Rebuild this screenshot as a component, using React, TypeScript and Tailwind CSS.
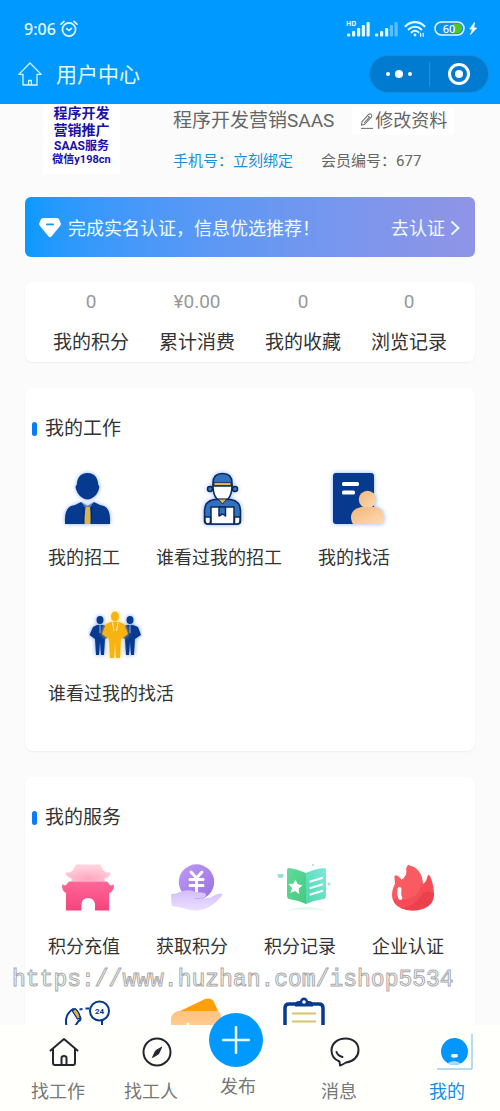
import React from "react";

type Item = { label: string; icon: React.ReactNode; hideLabel?: boolean };

const NAVY = "#063a8f";

/* ---------- status bar icons ---------- */

const AlarmIcon = () => (
  <svg width="18" height="18" viewBox="0 0 18 18" fill="none" stroke="#e4f9ff" strokeLinecap="round">
    <circle cx="9" cy="9.5" r="6.6" strokeWidth="1.7" />
    <path d="M6.6 8.6 9 10.6l2.6-2.2" strokeWidth="1.5" />
    <path d="M1 4.2 4 1.4M17 4.2l-3-2.8" strokeWidth="1.6" />
  </svg>
);

const SignalIcon = ({ hd }: { hd?: boolean }) => (
  <svg width="24" height="18" viewBox="0 0 24 18" fill="#e4f9ff">
    {hd && (
      <text x="0" y="6" fontSize="7" fontWeight="700">
        HD
      </text>
    )}
    <rect x="1" y="13.500" width="3.200" height="3" rx="1" />
    <rect x="6" y="11" width="3.200" height="5.500" rx="1" />
    <rect x="11" y="8" width="3.200" height="8.500" rx="1" />
    <rect x="15.800" y="5" width="3.200" height="11.500" rx="1" opacity={hd ? 1 : 0.4} />
    <rect x="20.500" y="2" width="3.200" height="14.500" rx="1" opacity={hd ? 1 : 0.4} />
  </svg>
);

const WifiIcon = () => (
  <svg width="22" height="18" viewBox="0 0 22 18" fill="none" stroke="#e4f9ff" strokeWidth="2.1" strokeLinecap="round">
    <path d="M1.500 6.200C7 .8 15 .8 20.500 6.200" />
    <path d="M4.600 9.400c3.800-3.500 9-3.500 12.800 0" />
    <path d="M7.600 12.300c2-1.800 4.800-1.800 6.800 0" />
    <circle cx="11" cy="15" r="1.400" fill="#e4f9ff" stroke="none" />
    <path d="M16.600 13.300v3M19.200 13.300v3" strokeWidth="1.300" />
  </svg>
);

const BatteryIcon = () => (
  <svg width="44" height="16" viewBox="0 0 44 16">
    <rect x="1" y="1" width="29" height="13" rx="6.5" fill="#0a92ec" stroke="#e4f9ff" strokeWidth="1.5" />
    <path d="M19 2.800h4.500a4.700 4.700 0 0 1 0 9.400H19z" fill="#4fc42c" />
    <text x="15" y="11.5" fontSize="11" fontWeight="500" textAnchor="middle" fill="#fff">
      60
    </text>
    <path d="M40.500 1.500 35.800 8h2.700l-2 5.500L42.600 7h-3z" fill="#fff" stroke="#fff" strokeWidth=".8" />
  </svg>
);

/* ---------- header icons ---------- */

const HomeOutline = () => (
  <svg width="24" height="24" viewBox="0 0 24 24" fill="none" stroke="#d9f6ff" strokeWidth="1.3" strokeLinejoin="round">
    <path d="M12 1 .8 12.4H5V23h14V12.4h4.200z" />
    <path d="M10.600 23v-4.500h2.800V23" />
  </svg>
);

const EditIcon = () => (
  <svg width="16" height="18" viewBox="0 0 16 18" fill="none" stroke="#777" strokeWidth="1.1" strokeLinejoin="round">
    <path d="M2.500 13.200 3 9.600 9.800 2.200a2 2 0 0 1 2.800 2.600L5.800 12.200zM8.600 3.600l2.800 2.600M5 11l5-5.400" />
    <path d="M2 16.400h12" />
  </svg>
);

const DiamondIcon = () => (
  <svg width="22" height="20" viewBox="0 0 22 20">
    <path d="M4 0h14l2 1 2 5-1 2-8.600 10.600q-1.400 1.200-2.800 0L1 8 0 6l2-5z" fill="#fff" />
    <rect x="7" y="5.500" width="8" height="1.800" rx=".9" fill="#1195fb" />
  </svg>
);

const ArrowIcon = () => (
  <svg width="10" height="16" viewBox="0 0 10 16" fill="none" stroke="#eefcff" strokeWidth="1.800">
    <path d="M1.500 1.500 8.500 8l-7 6.500" />
  </svg>
);

/* ---------- job icons ---------- */

const BossIcon = () => (
  <svg className="size-[54px] drop-shadow-[0_0_2px_#8fb0ff]" viewBox="0 0 54 54" fill={NAVY}>
    <path d="M26.500 1c7.500 0 10.500 5 10.700 12 1.500.3 1.500 3 0 6C36 23 31 27.500 26.500 27.500S17 23 15.800 19c-1.500-3-1.500-5.700 0-6C16 6 19 1 26.500 1z" />
    <path d="M20 30q-5 3-10 4Q3 37 4 52h45q1-15-6-18-5-1-10-4l-6.500 4z" />
    <path d="M20 29.500l6.500 4 6.500-4-3.500 5.500h-6z" fill="#cfe0ff" opacity=".4" />
    <path d="M24.500 35h4.500l1 17h-7z" fill="#ddb44c" />
    <path d="M22 35 23 52M31 35l-1 17" stroke="#052763" />
  </svg>
);

const CourierIcon = () => (
  <svg
    className="size-[54px] drop-shadow-[0_0_2px_#8fb0ff]"
    viewBox="0 0 54 54"
    fill="none"
    stroke="#0a2a5c"
    strokeWidth="1.500"
    strokeLinejoin="round"
  >
    <circle cx="14" cy="17" r="2.500" fill="#3a78c4" />
    <circle cx="39" cy="17" r="2.500" fill="#3a78c4" />
    <path d="M17 13q0 15 9.500 17Q36 28 36 13z" fill="#fff" />
    <path d="M17 11q0-9.500 9.500-9.500T36 11v3H17z" fill="#3271bd" />
    <path d="M18 10.500h17v3H18z" fill="#eab544" strokeWidth=".8" />
    <path d="M8.500 39q0-10 10-11.500h16q10 1.500 10 11.500v10q0 3-3 3H12q-3.500 0-3.500-3z" fill="#3271bd" />
    <path d="M22 27h9l-4.500 5z" fill="#eab544" strokeWidth="1" />
    <path d="M15 35h23v17H15z" fill="#fff" />
    <path d="M23 35v9l3.500-2 3 2v-9z" fill="#3271bd" />
    <path d="M9 45h5.500v4.500q0 2.500-2.500 2.500-3 0-3-3zM38.500 45H44v4q0 3-3 3h-2.500z" fill="#fff" />
  </svg>
);

const ResumeIcon = () => (
  <svg className="size-[54px] drop-shadow-[0_0_2px_#8fb0ff]" viewBox="0 0 54 54">
    <defs>
      <linearGradient id="peach" x1="0" y1="0" x2="1" y2="1">
        <stop offset="0" stopColor="#f0b67c" />
        <stop offset="1" stopColor="#ffdbb2" />
      </linearGradient>
    </defs>
    <rect x="2" y="1" width="41" height="51" rx="3" fill={NAVY} />
    <rect x="11" y="10" width="17" height="4" rx="1.500" fill="#fff" />
    <rect x="11" y="18.500" width="13" height="4" rx="1.500" fill="#fff" />
    <circle cx="36.500" cy="27.500" r="8.700" fill="url(#peach)" />
    <path d="M22 52q-3-5-1.500-10Q22 37 30 35h14q9 1 9 12 0 4-2 5z" fill="url(#peach)" />
  </svg>
);

const TeamIcon = () => (
  <svg className="size-[54px]" viewBox="0 0 54 54">
    <g fill={NAVY} className="drop-shadow-[0_0_2px_#6f9cff]">
      <ellipse cx="12" cy="12" rx="3.500" ry="4" />
      <path d="M9 17h6l6 2 3 8-7 4-1 16h-3l-1-13-1 13H8L7 31l-5.500-4L5 19z" />
      <ellipse cx="42" cy="12" rx="3.500" ry="4" />
      <path d="M39 17h6l5 2 3 8-6 4-1 16h-3l-1-13-1 13h-3l-1-16-6-4 3-8z" />
    </g>
    <path d="M12 17v8M42 17v8" stroke="#b9ceff" strokeWidth=".8" />
    <g fill="#f8b313" className="drop-shadow-[0_0_2px_#ffd763]">
      <ellipse cx="27" cy="8.500" rx="4" ry="5" />
      <path d="M23 14h8l5 2 4 10-7 5-1 19h-4l-1-16-1 16h-4l-1-19-7-5 4-10z" />
    </g>
    <path d="M24.500 14.500 26 23M30 14.500 28.500 23" stroke="#fff2c8" strokeWidth=".9" />
  </svg>
);

/* ---------- service icons ---------- */

const GateIcon = () => (
  <svg className="size-[54px]" viewBox="0 0 54 54">
    <defs>
      <radialGradient id="roof" cx=".5" cy=".85" r=".7">
        <stop offset="0" stopColor="#ffa5bf" />
        <stop offset="1" stopColor="#ffd0dd" />
      </radialGradient>
      <linearGradient id="wall" x1="0" y1="0" x2="0" y2="1">
        <stop offset="0" stopColor="#ff6799" />
        <stop offset="1" stopColor="#f6437e" />
      </linearGradient>
    </defs>
    <path d="M15 3.500h24l3 5.500 3 2.500h4.500q0 4.500-6 6V20.500H10.500V17.500Q5 16 4.500 11.500H9L12 9z" fill="url(#roof)" />
    <path
      d="M8 20.500h38l3.500 4 3.500-1q0 7-4.800 8.500V49.500H34V43q-1-6-7-6t-6.500 6v6.500H5V32Q.6 30 1 23.500l3.500 1z"
      fill="url(#wall)"
    />
  </svg>
);

const CoinIcon = () => (
  <svg className="size-[54px]" viewBox="0 0 54 54">
    <defs>
      <linearGradient id="coin" x1="0" y1="0" x2="1" y2="1">
        <stop offset="0" stopColor="#bd9af5" />
        <stop offset="1" stopColor="#9871df" />
      </linearGradient>
      <linearGradient id="palm" x1="0" y1="0" x2="0" y2="1">
        <stop offset="0" stopColor="#d3bef9" />
        <stop offset="1" stopColor="#eadfff" />
      </linearGradient>
    </defs>
    <circle cx="27.500" cy="21" r="17.700" fill="url(#coin)" />
    <path
      d="M22 11l5.500 6 5.500-6M21 18.500h13M21 24.500h13M27.500 17v14"
      fill="none"
      stroke="#fff"
      strokeWidth="3"
      strokeLinecap="round"
    />
    <path
      d="M2 33q5 0 9-2 6-2.500 11-1.500 5 2 10 2 5 0 5 2.500 0 2-3 3 6 1 10-2 5-3 8.500-2.500 2 1-2 5-6 7-15 10.500-10 3-20-.5-7-2-12.500-2.500-1-5-1-12z"
      fill="url(#palm)"
    />
    <path d="M26 37.500q5 .5 9-1" fill="none" stroke="#c3a8f2" />
  </svg>
);

const RecordIcon = () => (
  <svg className="size-[54px]" viewBox="0 0 54 54">
    <defs>
      <linearGradient id="pageL" x1="0" y1="0" x2="1" y2="1">
        <stop offset="0" stopColor="#5fdc9a" />
        <stop offset="1" stopColor="#45c97f" />
      </linearGradient>
      <linearGradient id="pageR" x1="0" y1="1" x2="1" y2="0">
        <stop offset="0" stopColor="#50d6a9" />
        <stop offset="1" stopColor="#7ceadd" />
      </linearGradient>
    </defs>
    <path d="M10 50q9-4 19-4t20 4q-10-2-20-1-10-1-19 1z" fill="#e3f8f1" />
    <path d="M12 7q8 1 17 5v31q-7-3.500-17-5-2-.5-2-3V9q0-2 2-2z" fill="url(#pageL)" />
    <path d="M29 12q8-4 18-5 2 0 2 2v26q0 2.500-2 3-11 1.500-18 5z" fill="url(#pageR)" />
    <path d="M18.500 18.500 20.500 23l5 1.500-3.700 3 .4 5.500-4.200-3-4.500 2 1.500-5-3.500-4 4.800-.3z" fill="#fff" />
    <path d="M33.500 20.500 45 17M33.500 27 45 23.500M33.500 33.500 45 30" stroke="#fff" strokeWidth="2.200" strokeLinecap="round" />
    <path d="M.5 13h6q.5 4-3 4t-3-4z" fill="#94e2d2" />
    <circle cx="52" cy="23" r="1.500" fill="#9be6da" />
    <circle cx="36" cy="4" r="1" fill="#9be6da" />
  </svg>
);

const FireIcon = () => (
  <svg className="size-[54px]" viewBox="0 0 54 54">
    <path
      d="M23 4q14 3 15 19 4-3 4.500-8 1-2 2.500 0 4 9 4 19-1 15-21 15.500Q8 49 7 34q0-6 3-11 0-4-.5-8 3-2 7 4 5-3 5-9-.5-4 1.500-6z"
      fill="#f54c57"
    />
    <path d="M49 32q0 16-21 17.500-7 0-12-2.500 14-1 22-15 5-3 11 0z" fill="#e93f4b" opacity=".8" />
    <path d="M23 4q13 3 14 16-1 14-14 18-10 2-16-1-.5-8 3-14-.5-4-.5-8 3-2 7 4 5-3 5-9-.500-4 1.500-6z" fill="#ff6a70" opacity=".5" />
    <path d="M14.500 28q-1 5 .8 9" fill="none" stroke="#fff" strokeWidth="4" strokeLinecap="round" />
  </svg>
);

const SupportIcon = () => (
  <svg className="size-[54px]" viewBox="0 0 54 54" fill="none" stroke={NAVY} strokeWidth="2">
    <circle cx="38.500" cy="14" r="9.500" />
    <path d="M24.500 11.500h4M18.500 12.500l3-.5M41 23v7" />
    <path d="M5.500 29Q3 18 12 12l3 1 4.500 8q0 3-2 3l-4 6" />
    <path d="M11.500 14 14 11.500q5 4 5 10L16.500 22z" fill="#eab544" strokeWidth="1.300" />
    <text x="38.500" y="17" fontSize="8" fontWeight="700" textAnchor="middle" fill={NAVY} stroke="none">
      24
    </text>
  </svg>
);

const WalletIcon = () => (
  <svg className="size-[54px]" viewBox="0 0 54 54">
    <defs>
      <linearGradient id="leather" x1="0" y1="0" x2="0" y2="1">
        <stop offset="0" stopColor="#ffc27d" />
        <stop offset="1" stopColor="#ffdcb4" />
      </linearGradient>
    </defs>
    <path d="M9 15 36 2q6-2 9 3l4 9v4z" fill="#ff9f0c" />
    <path d="M9 14h40q3 2 3 6v32H2V21q1-5 7-7z" fill="url(#leather)" />
    <circle cx="19" cy="27" r="1.500" fill="#fff" />
  </svg>
);

const ClipboardIcon = () => (
  <svg className="size-[54px]" viewBox="0 0 54 54" fill="none">
    <path d="M8 52V11q0-4 4-4h30q4 0 4 4v41" stroke={NAVY} strokeWidth="3.500" />
    <path d="M18 8q0-4 4-4h1q1-3.500 4-3.500T31 4h1q4 0 4 4v1.500H18z" fill={NAVY} />
    <circle cx="27" cy="5" r="1.800" fill="#fff" />
    <path d="M15 16.500h24M15 24.500h24" stroke="#d8c26f" strokeWidth="2" />
  </svg>
);

/* ---------- tab bar icons ---------- */

const tabIcon = {
  width: 30,
  height: 30,
  viewBox: "0 0 30 30",
  fill: "none",
  stroke: "#26262f",
  strokeWidth: 2,
  strokeLinejoin: "round",
  strokeLinecap: "round",
} as const;

const TabHome = () => (
  <svg {...tabIcon}>
    <path d="M1.500 13.500 15 2l13.500 11.500M4 12v14q0 2 2 2h18q2 0 2-2V12" />
    <path d="M12.500 28v-7q0-2 2.500-2t2.500 2v7" />
  </svg>
);

const TabCompass = () => (
  <svg {...tabIcon}>
    <circle cx="15" cy="15" r="13.500" />
    <path d="M19.500 10.500l-3 6.500-6 3.500 3-6.500z" fill="#26262f" strokeWidth="1" />
  </svg>
);

const TabChat = () => (
  <svg {...tabIcon}>
    <path d="M9.500 24.500C4.500 22.500 1.500 18.500 1.500 13.500 1.500 6.500 7.500 1.500 15.500 1.500s13 5 13 11.500-4.500 11.500-12.500 12.500q-3 2-6 3z" />
    <path d="M6.500 15q1 3.500 6 5" />
  </svg>
);

const TabMine = () => (
  <svg width="40" height="36" viewBox="12 0 40 36" fill="none">
    <circle cx="33.500" cy="17.500" r="13.500" fill="#0596fc" />
    <rect x="30" y="20" width="7" height="3.500" rx="1.700" fill="#fff" />
    <path d="M26 29.500q7-5 14 0-7 3-14 0z" fill="#a5dcff" />
    <path d="M51 0v35H16" stroke="#6bb7e6" />
  </svg>
);

/* ---------- data ---------- */

const stats = [
  { value: "0", label: "我的积分" },
  { value: "¥0.00", label: "累计消费" },
  { value: "0", label: "我的收藏" },
  { value: "0", label: "浏览记录" },
];

const jobs: Item[] = [
  { label: "我的招工", icon: <BossIcon /> },
  { label: "谁看过我的招工", icon: <CourierIcon /> },
  { label: "我的找活", icon: <ResumeIcon /> },
  { label: "谁看过我的找活", icon: <TeamIcon /> },
];

const services: Item[] = [
  { label: "积分充值", icon: <GateIcon /> },
  { label: "获取积分", icon: <CoinIcon /> },
  { label: "积分记录", icon: <RecordIcon /> },
  { label: "企业认证", icon: <FireIcon /> },
  { label: "客服", icon: <SupportIcon />, hideLabel: true },
  { label: "钱包", icon: <WalletIcon />, hideLabel: true },
  { label: "订单", icon: <ClipboardIcon />, hideLabel: true },
];

const Section = ({ title, items }: { title: string; items: Item[] }) => (
  <section className="mt-[26px] rounded-lg bg-white pt-[27px] pb-[43px] shadow-[0_1px_2px_rgba(0,0,0,0.05)]">
    <h2 className="flex items-center gap-2 pl-[7px] text-[19px] leading-7">
      <span className="h-3.5 w-[5px] rounded-full bg-[#0a7cf5]" />
      {title}
    </h2>
    <div className="mt-[29px] flex flex-wrap gap-x-9 gap-y-9 px-[23px]">
      {items.map((item) => (
        <a
          key={item.label}
          href="#"
          aria-label={item.hideLabel ? item.label : undefined}
          className="flex min-w-[72px] flex-col items-center gap-[18px] text-[18px] leading-7"
        >
          <span className="pl-2">{item.icon}</span>
          {!item.hideLabel && <span>{item.label}</span>}
        </a>
      ))}
    </div>
  </section>
);

const Tab = ({ label, children, active }: { label: string; children: React.ReactNode; active?: boolean }) => (
  <a
    href="#"
    className={`flex flex-col items-center gap-px text-[18px] leading-6 ${active ? "text-[#1290e6]" : "text-[#777]"}`}
  >
    <span className="flex h-[54px] items-center pl-3">{children}</span>
    {label}
  </a>
);

export default function App() {
  return (
    <div
      lang="zh-CN"
      className="relative flex h-screen flex-col bg-[#fbfbfb] font-['Roboto','Noto_Sans_CJK_SC',sans-serif] text-[#333]"
    >
      <header className="bg-[#0099ff] text-[#e4f9ff]">
        <div className="flex h-12 items-center justify-between pt-2.5 pr-[22px] pl-6">
          <div className="flex items-center gap-1 font-['Noto_Sans',sans-serif] text-[16px] font-medium">
            <span>9:06</span>
            <AlarmIcon />
          </div>
          <div className="flex items-center gap-1 font-['Noto_Sans',sans-serif]">
            <SignalIcon hd />
            <SignalIcon />
            <span className="pr-1 pl-0.5">
              <WifiIcon />
            </span>
            <BatteryIcon />
          </div>
        </div>
        <div className="flex h-14 items-center justify-between pr-[11px] pb-1 pl-[18px]">
          <div className="flex items-center gap-3.5">
            <a href="#" aria-label="首页">
              <HomeOutline />
            </a>
            <h1 className="pt-0.5 text-[21px] leading-7">用户中心</h1>
          </div>
          <div className="flex h-[38px] w-[120px] items-center rounded-full border border-[#1a8ade] bg-[#007bd0]">
            <button type="button" aria-label="更多" className="flex flex-1 items-center justify-center gap-[5px]">
              <span className="size-1 rounded-full bg-white" />
              <span className="size-2 rounded-full bg-white" />
              <span className="size-1 rounded-full bg-white" />
            </button>
            <span className="h-6 w-px bg-[#2b8fda]" />
            <button type="button" aria-label="关闭" className="flex flex-1 justify-center">
              <span className="flex size-[22px] items-center justify-center rounded-full border-[3px] border-white">
                <span className="size-2 rounded-full bg-white" />
              </span>
            </button>
          </div>
        </div>
      </header>

      <main className="min-h-0 flex-1 overflow-y-auto px-[25px] [scrollbar-width:none]">
        <div className="flex pl-[18px]">
          <div className="flex h-[70px] w-[77px] shrink-0 flex-col items-center bg-white pt-px font-bold whitespace-nowrap text-[#1b10a8]">
            <span className="text-[14px] leading-[17px]">程序开发</span>
            <span className="text-[14px] leading-[17px]">营销推广</span>
            <span className="text-[12px] leading-[14px]">SAAS服务</span>
            <span className="text-[11px] leading-[13px]">微信y198cn</span>
          </div>
          <div className="ml-[53px] flex flex-col gap-4 pt-[3px] whitespace-nowrap text-[#666]">
            <div className="flex items-center gap-[18px] text-[19px] leading-7">
              <span>程序开发营销SAAS</span>
              <button type="button" className="flex items-center rounded bg-white px-[7px] text-[18px] leading-7">
                <EditIcon />
                修改资料
              </button>
            </div>
            <div className="flex gap-7 text-[15px] leading-5">
              <a href="#" className="text-[#1a90d8]">
                手机号：立刻绑定
              </a>
              <span>会员编号：677</span>
            </div>
          </div>
        </div>

        <a
          href="#"
          className="mt-[23px] flex h-[60px] items-center rounded-md bg-linear-to-r from-[#0699ff] to-[#9094e6] pt-0.5 pr-[15px] pl-3.5 text-[18px] text-[#eefcff]"
        >
          <DiamondIcon />
          <span className="ml-[7px] flex-1">完成实名认证，信息优选推荐！</span>
          <span className="mr-[5px]">去认证</span>
          <ArrowIcon />
        </a>

        <section className="mt-[25px] grid grid-cols-4 rounded-lg bg-white px-[13px] pt-1.5 pb-[5px] text-center text-[19px] shadow-[0_1px_2px_rgba(0,0,0,0.05)]">
          {stats.map((stat) => (
            <div key={stat.label}>
              <p className="leading-7 text-[#999]">{stat.value}</p>
              <p className="mt-[13px] leading-7">{stat.label}</p>
            </div>
          ))}
        </section>

        <Section title="我的工作" items={jobs} />
        <Section title="我的服务" items={services} />
      </main>

      <nav className="grid grid-cols-[92fr_94fr_80fr_122fr_94fr] bg-[#fffffc] pr-1.5 pb-[7px] pl-3">
        <Tab label="找工作">
          <TabHome />
        </Tab>
        <Tab label="找工人">
          <TabCompass />
        </Tab>
        <a href="#" className="-mt-3 flex flex-col items-center gap-2 text-[18px] leading-6 text-[#777]">
          <span className="mr-1 flex size-[54px] items-center justify-center rounded-full bg-[#0099ff]">
            <svg width="28" height="28" viewBox="0 0 28 28" stroke="#e8f9ff" strokeWidth="2.500" strokeLinecap="round">
              <path d="M14 1v26M1 14h26" />
            </svg>
          </span>
          发布
        </a>
        <Tab label="消息">
          <TabChat />
        </Tab>
        <Tab label="我的" active>
          <TabMine />
        </Tab>
      </nav>

      <p className="pointer-events-none absolute bottom-[117px] left-3 font-['Liberation_Mono',monospace] text-[23px] leading-7 text-white [-webkit-text-stroke:1px_#aaa]">
        https://www.huzhan.com/ishop5534
      </p>
    </div>
  );
}
